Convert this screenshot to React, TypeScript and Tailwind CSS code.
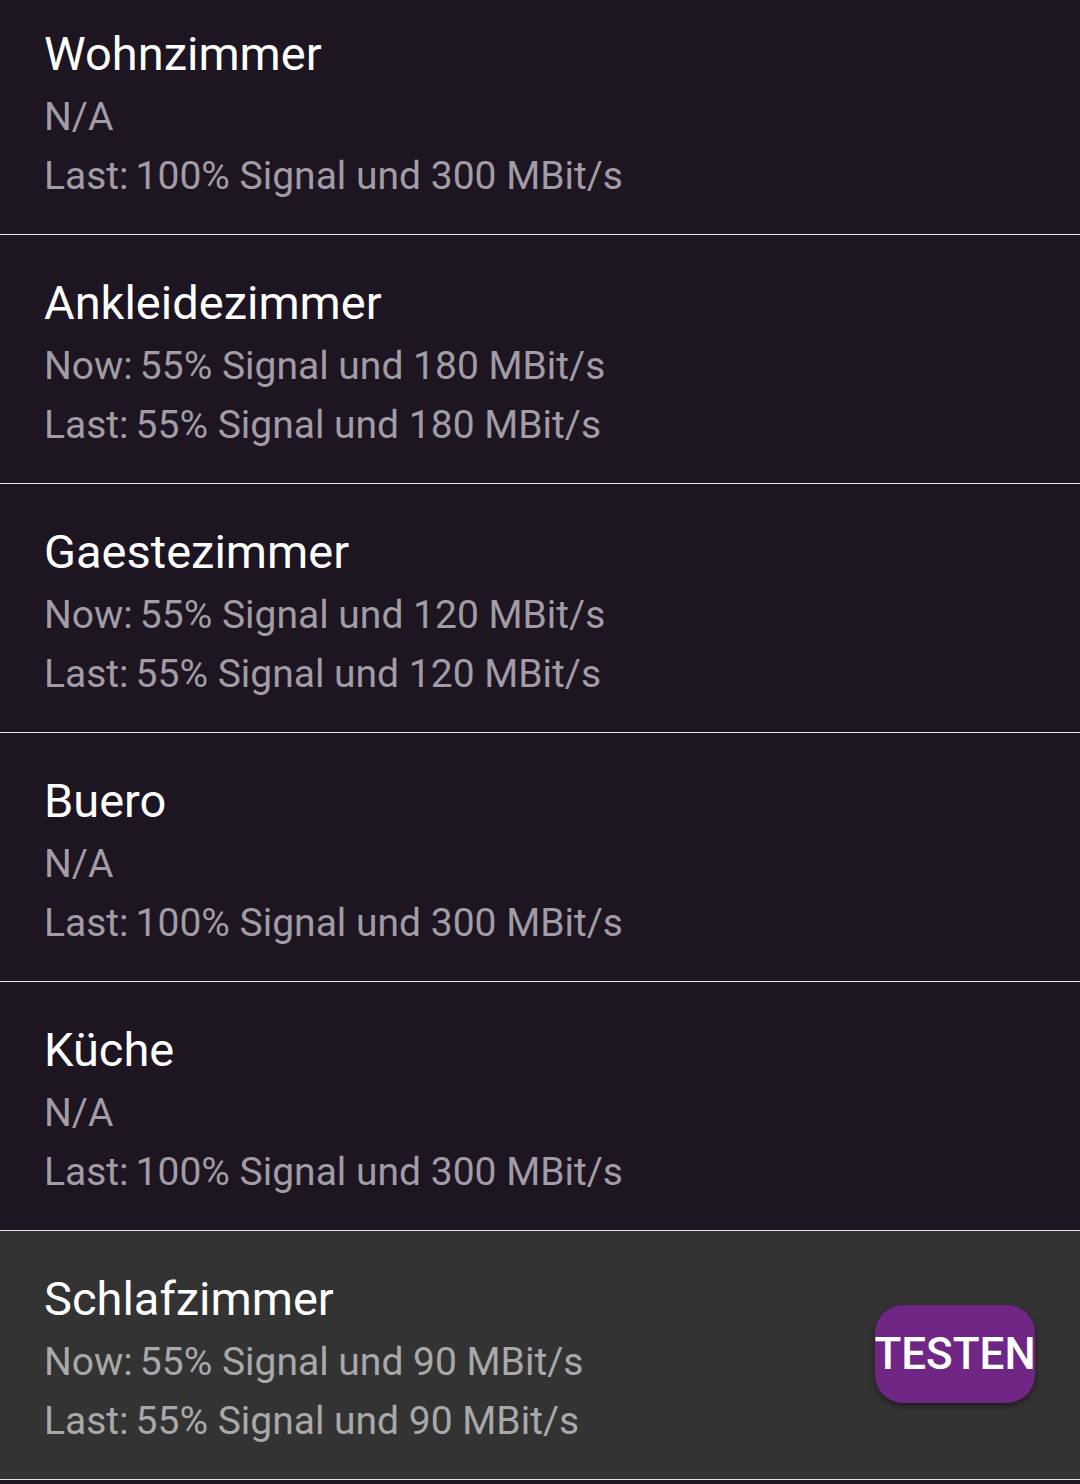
import React from "react";

type Line = { label: string; value: string } | null;
type Item = { name: string; now: Line; last: Line; selected?: boolean };

const items: Item[] = [
  { name: "Wohnzimmer", now: null, last: { label: "Last:", value: "100% Signal und 300 MBit/s" } },
  {
    name: "Ankleidezimmer",
    now: { label: "Now:", value: "55% Signal und 180 MBit/s" },
    last: { label: "Last:", value: "55% Signal und 180 MBit/s" },
  },
  {
    name: "Gaestezimmer",
    now: { label: "Now:", value: "55% Signal und 120 MBit/s" },
    last: { label: "Last:", value: "55% Signal und 120 MBit/s" },
  },
  { name: "Buero", now: null, last: { label: "Last:", value: "100% Signal und 300 MBit/s" } },
  { name: "Küche", now: null, last: { label: "Last:", value: "100% Signal und 300 MBit/s" } },
  {
    name: "Schlafzimmer",
    now: { label: "Now:", value: "55% Signal und 90 MBit/s" },
    last: { label: "Last:", value: "55% Signal und 90 MBit/s" },
    selected: true,
  },
];

function Sub({ line, selected, first }: { line: Line; selected?: boolean; first?: boolean }) {
  return (
    <div
      className={`whitespace-nowrap text-[39px] leading-[59px] ${first ? "mt-[5px]" : ""} ${
        selected ? "text-[#a9a9a9]" : "text-[#a19ca5]"
      }`}
    >
      {line ? (
        <>
          <span>{line.label}</span>
          <span className="ml-[7px]">{line.value}</span>
        </>
      ) : (
        "N/A"
      )}
    </div>
  );
}

export default function App() {
  return (
    <div
      className="w-[1080px] h-[1484px] overflow-hidden bg-[#1d1521]"
      style={{ fontFamily: "Roboto, 'Noto Sans', sans-serif" }}
    >
      <div className="-mt-[14px] flex flex-col">
        {items.map((it) => (
          <div
            key={it.name}
            className={`relative h-[249px] shrink-0 border-b border-[#e6e4e8] pl-[44px] pt-[39px] ${
              it.selected ? "bg-[#333333]" : "bg-[#1d1521]"
            }`}
          >
            <div className="text-[47px] leading-[58px] text-white">{it.name}</div>
            <Sub line={it.now} selected={it.selected} first />
            <Sub line={it.last} selected={it.selected} />
            {it.selected && (
              <div className="absolute left-[875px] top-[74px] flex h-[98px] w-[160px] items-center justify-center overflow-hidden rounded-[28px] bg-[#6f2685] shadow-[0_3px_6px_rgba(0,0,0,0.45)]">
                <span className="whitespace-nowrap text-[44px] font-medium leading-none text-white">TESTEN</span>
              </div>
            )}
          </div>
        ))}
      </div>
    </div>
  );
}
